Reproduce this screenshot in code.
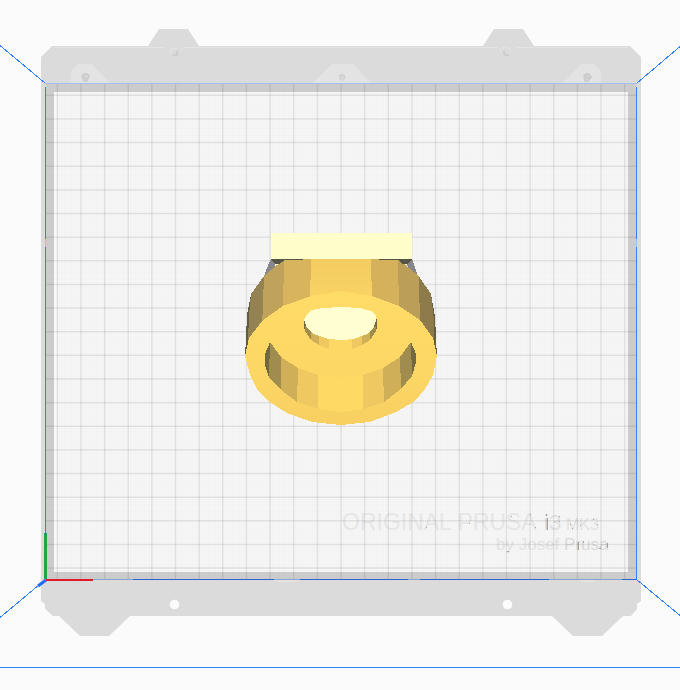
const range = (n) => Array.from({ length: n }, (_, i) => i);

const BED = { left: 45.5, right: 636.5, top: 83.5, bottom: 579.5 };
const MM = 2.364;

function Plate() {
  return (
    <g>
      <path
        fill="#dbdbdb"
        d="M41 57 L52 46 H148 L159 29 H188 L199 46 H483 L494 29 H523 L534 46 H630 L641 57 V601 L637 604 V609 L631 616 H623 L602 636 H573 L552 616 H130 L109 636 H80 L59 616 H53 L45 609 V604 L41 601 Z"
      />
      <path fill="none" stroke="#e4e4e4" d="M54 47.500 H165 M184 47.500 H498 M517 47.500 H628" />
      <g fill="#e3e3e3">
        <path d="M71 83 V71 L78 64 H92 L110 83 Z" />
        <path d="M601 83 V71 L594 64 H581 L563 83 Z" />
        <path d="M313 83 L332 64 H353 L371 83 Z" />
        <path d="M579 580 H596 L593 582 H582 Z" />
        <path d="M274 580 H300 L297 582 H277 Z" />
      </g>
      <g fill="#d6d6d6" stroke="#c9c9c9" strokeWidth="1.500">
        <path d="M82 76 L84 74 H87 L89 76 L87 81 H84 Z M84 77 L87 79" />
        <path d="M584 76 L586 74 H589 L591 77 L588 81 H585 Z M586 76 L589 79" />
      </g>
      <circle cx="342" cy="78" r="3" fill="#d6d6d6" />
      <path d="M339.500 77 V75.500 H341 V74.500 H343 V75.500 H344.500 V78" fill="none" stroke="#cacaca" strokeWidth="1" />
      <g fill="none">
        <path stroke="#e6e6e6" d="M170 53 L172 49 H177 M181 51 L183 48 M501 51 L499 48 M503 48 H509 L511 52" />
        <path stroke="#c9c9c9" strokeWidth="1.500" d="M173 55 H177 V51 M504 51 V54 L507 55.500 H509" />
      </g>
      <circle cx="174.500" cy="604.500" r="4.800" fill="#fbfbfb" />
      <circle cx="507.500" cy="604.500" r="4.800" fill="#fbfbfb" />
    </g>
  );
}

function Bed() {
  const { left, right, top, bottom } = BED;
  return (
    <g>
      <rect x="46" y="84" width="590" height="495" fill="#cecece" />
      <rect x="54" y="92" width="574" height="480" fill="#f7f7f7" />
      <rect x="54" y="92" width="3" height="480" fill="#fbfbfb" />
      <g stroke="#000000" strokeOpacity="0.015" strokeWidth="1">
        {range(249).map((i) => (
          <line key={"v" + i} x1={left + (i + 1) * MM} x2={left + (i + 1) * MM} y1={top} y2={bottom} />
        ))}
        {range(209).map((i) => (
          <line key={"h" + i} x1={left} x2={right} y1={top + (i + 1) * MM} y2={top + (i + 1) * MM} />
        ))}
      </g>
      <BedLabel />
      <g stroke="#000000" strokeOpacity="0.080" strokeWidth="1.500">
        {range(25).map((i) => (
          <line key={"V" + i} x1={left + (i * 10 + 5) * MM} x2={left + (i * 10 + 5) * MM} y1={top} y2={bottom} />
        ))}
        {range(21).map((i) => (
          <line key={"H" + i} x1={left} x2={right} y1={top + (i * 10 + 5) * MM} y2={top + (i * 10 + 5) * MM} />
        ))}
      </g>
    </g>
  );
}

function BedLabel() {
  return (
    <g className="font-['Liberation_Sans',Arial,sans-serif]" fill="#e6e6e6">
      <text x="342" y="530" fontSize="23">ORIGINAL PRUSA</text>
      <text x="544" y="530" fontSize="22">
        <tspan fill="#d2d2d2">i</tspan>
        <tspan fill="#e0e0e0">3</tspan>
      </text>
      <text x="566" y="530" fontSize="16" fill="#e2e2e2">MK3</text>
      <text x="496" y="550" fontSize="17" fill="#e3e3e3">
        by Josef <tspan fill="#dadada">Prusa</tspan>
      </text>
      <path
        stroke="#a5a5a5"
        fill="none"
        d="M546.500 514 V516 M547.500 518 V530 M469 523.500 h1 M511 516.500 h1 M530 514.500 h1 M535 527.500 h1 M426 527.500 h1 M559 516.500 h1 M559 521.500 h1 M570 524.500 h1 M572 528.500 h1 M580 525.500 h1 M593 519.500 h1 M597 524.500 h1 M507 551.500 h2 M578.500 542 V550 M583.500 541 v2 M599 548.500 h2 M607.500 543 v5"
      />
    </g>
  );
}

function Axes() {
  return (
    <g fill="none">
      <g stroke="#2f81f7" shapeRendering="crispEdges">
        <path d="M0 45.500 L45.500 83.500 M680 46.500 L636.500 83.500 M0 617.500 L45.500 579.500 M680 615.500 L636.500 579.500" />
        <path d="M45.500 87 V534 M636.500 87 V580 M0 667.500 H680" />
      </g>
      <g shapeRendering="crispEdges">
        <path stroke="#9dbff3" d="M45 83.500 H637 M45.500 239 V247 M636.500 239 V247" />
        <path stroke="#82a3d6" d="M93 579.500 H637" />
        <path stroke="#2868cc" d="M133 579.500 H274 M300 579.500 H408 M420 579.500 H549 M622 579.500 H637" />
      </g>
      <path stroke="#1e6ff0" strokeWidth="3" d="M46 580 L38 586" />
      <path stroke="#e01b24" strokeWidth="2" d="M46 580 H93" />
      <path stroke="#22a447" strokeWidth="3" d="M45.500 533 V579" />
    </g>
  );
}

const BODY = [
  // support legs beneath the block
  ["#88868a", "M271 259 L275 263 L275 269 L264 277 L266 270 Z"],
  ["#88868a", "M412 259 L407 264 L408 268 L418 277 L416 270 Z"],
  ["#ffffcc", "M275 263 H282 L276 268 Z M407 263 H400 L406 268 Z"],
  // outer wall
  ["url(#wall)", "M310 259 H372 V298 H310 Z"],
  ["#615c43", "M251 294 L247 315 L245 358 L249 348 L253 320 Z"],
  ["#615c43", "M431 294 L435 317 L437 358 L433 348 L429 320 Z"],
  ["#938252", "M264 276 L251 294 L249 315 L248 342 L263 330 Z"],
  ["#8d7b4c", "M418 275 L431 294 L434 320 V342 L420 330 Z"],
  ["#bfa35a", "M284 259 L264 276 L262 328 L284 312 Z"],
  ["#bb9f58", "M398 259 L419 276 L420 328 L398 312 Z"],
  ["#d8b45d", "M284 259 H311 L310 302 L283 310 Z"],
  ["#d5b15c", "M371 259 H398 L399 310 L372 302 Z"],
  ["#555545", "M271 259 H303 V260 H285 L279 264 H275 Z"],
  ["#555545", "M412 259 H379 V260 H398 L403 264 H407 Z"],
  ["#ffffcc", "M271 233 H412 V259 H271 Z"],
];

const BORES = [
  // inner bore
  ["#716740", "M270 342 L265 354 V365 L269 377 Z"],
  ["#716740", "M411 342 L416 354 V362 L412 376 L409 378 Z"],
  ["#a18c50", "M270 342 L281 357 V390 L269 377 Z"],
  ["#a18c50", "M411 342 L400 357 L401 389 L412 376 Z"],
  ["#d0af59", "M281 357 L298 368 L297 402 L281 390 Z"],
  ["#d0af59", "M400 357 L383 368 L384 402 L401 389 Z"],
  ["#efc861", "M298 368 L318 375 V409 L297 402 Z"],
  ["#efc861", "M383 368 L363 375 V409 L384 402 Z"],
  ["#fed963", "M318 375 L341 377 L363 375 V409 L341 412 L318 409 Z"],
  // centre hole
  ["#716740", "M304 318 L307 327 V334 L304 328 Z M377 318 L374 327 V334 L377 328 Z"],
  ["#a18c50", "M305 325 L311 332 V340 L305 331 Z M376 325 L370 332 V340 L376 331 Z"],
  ["#d0af59", "M311 331 L319 336 V345 L311 340 Z M370 331 L362 336 V345 L370 340 Z"],
  ["#efc861", "M319 335 L329 338 V349 L319 345 Z M362 335 L352 338 V349 L362 345 Z"],
  ["#ffffd2", "M304 320 L307 314 L312 310 L322 308 L341 307 L360 308 L371 311 L376 316 V321 L373 328 L367 334 L354 339 L341 340 L328 339 L314 334 L307 328 Z"],
];

const RING =
  "M341 291 L311 296 L283 306 L263 320 L249 338 L245 356 L250 375 L257 389 L268 401 L287 413 L312 422 L341 425 L370 422 L396 412 L415 401 L425 389 L433 375 L437 356 L433 338 L420 320 L399 306 L372 296 Z";

function Facets({ items }) {
  return items.map(([fill, d]) => <path key={d} fill={fill} d={d} />);
}

function Model() {
  return (
    <g shapeRendering="crispEdges">
      <Facets items={BODY} />
      <path fill="url(#ring)" d={RING} />
      <Facets items={BORES} />
    </g>
  );
}

export default function App() {
  return (
    <main className="min-h-screen w-full overflow-hidden bg-[#fbfbfb]">
      <svg viewBox="0 0 680 690" className="block h-auto w-full" role="img">
        <defs>
          <linearGradient id="ring" x1="0" y1="0" x2="0" y2="1">
            <stop offset="0" stopColor="#ffdb67" />
            <stop offset="0.600" stopColor="#fdd765" />
            <stop offset="1" stopColor="#f7cf62" />
          </linearGradient>
          <linearGradient id="wall" x1="0" y1="0" x2="0" y2="1">
            <stop offset="0" stopColor="#f3cb61" />
            <stop offset="1" stopColor="#fad364" />
          </linearGradient>
        </defs>
        <Plate />
        <Bed />
        <Axes />
        <Model />
      </svg>
    </main>
  );
}
